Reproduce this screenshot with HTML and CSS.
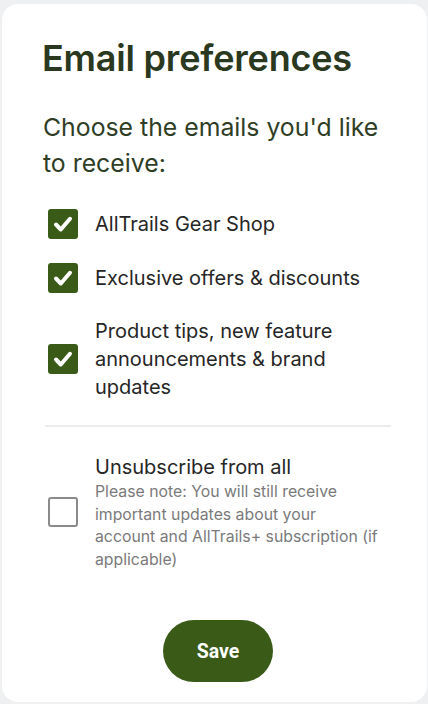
FILE: index.html
```html
<!DOCTYPE html>
<html lang="en">
<head>
<meta charset="UTF-8" />
<meta name="viewport" content="width=device-width, initial-scale=1" />
<title>Email preferences</title>
<link rel="stylesheet" href="styles.css">
</head>
<body>
<div class="card">
  <h1 class="title">Email preferences</h1>
  <p class="intro">Choose the emails you'd like to receive:</p>

  <ul class="options">
    <li class="option">
      <span class="box checked">
        <svg viewBox="0 0 30 30" width="30" height="30"><path d="M8 15.5 L12.8 20.5 L22 9.8" /></svg>
      </span>
      <span class="label">AllTrails Gear Shop</span>
    </li>
    <li class="option">
      <span class="box checked">
        <svg viewBox="0 0 30 30" width="30" height="30"><path d="M8 15.5 L12.8 20.5 L22 9.8" /></svg>
      </span>
      <span class="label">Exclusive offers &amp; discounts</span>
    </li>
    <li class="option">
      <span class="box checked">
        <svg viewBox="0 0 30 30" width="30" height="30"><path d="M8 15.5 L12.8 20.5 L22 9.8" /></svg>
      </span>
      <span class="label">Product tips, new feature announcements &amp; brand updates</span>
    </li>
  </ul>

  <hr class="divider">

  <div class="option unsub">
    <span class="box"></span>
    <div class="unsub-text">
      <span class="label">Unsubscribe from all</span>
      <p class="note">Please note: You will still receive important updates about your<br>account and AllTrails+ subscription (if applicable)</p>
    </div>
  </div>

  <div class="actions">
    <button class="save" type="button">Save</button>
  </div>
</div>
</body>
</html>
```

FILE: styles.css
```css
:root {
  --green: #3a5a17;
  --title: #2a3820;
  --text: #262626;
  --muted: #7a7a7a;
  --font: Inter, "Noto Sans", sans-serif;
}

*, *::before, *::after {
  box-sizing: border-box;
}

html, body {
  margin: 0;
  background: #eff0f1;
  font-family: var(--font);
}

/* Card */
.card {
  margin: 4px 1px 2px 2px;
  background: #fff;
  border-radius: 16px;
  padding: 30px 36px 20px 41px;
  height: 698px;
}

.title {
  margin: 0 0 0 -1px;
  font-size: 36px;
  line-height: 48px;
  font-weight: 600;
  color: var(--title);
  letter-spacing: -0.2px;
}

.intro {
  margin: 27px 0 0;
  font-size: 24.8px;
  line-height: 36px;
  color: #2f3d26;
}

/* Options */
.options {
  list-style: none;
  margin: 28px 0 0;
  padding: 0;
  display: flex;
  flex-direction: column;
  gap: 24px;
}

.option {
  display: flex;
  align-items: center;
  gap: 17px;
  padding-left: 5px;
}

.box {
  flex: none;
  width: 30px;
  height: 30px;
  border-radius: 3px;
  border: 2px solid #8a8a8a;
  display: flex;
}
.box.checked {
  background: var(--green);
  border: none;
}
.box svg path {
  fill: none;
  stroke: #fff;
  stroke-width: 4;
  stroke-linecap: round;
  stroke-linejoin: round;
}

.label {
  font-size: 20px;
  line-height: 28px;
  color: var(--text);
}

.divider {
  border: none;
  border-top: 2px solid #ececec;
  margin: 24px 0 26px 2px;
}

/* Unsubscribe */
.unsub-text {
  display: flex;
  flex-direction: column;
}
.note {
  margin: 0;
  font-size: 15.8px;
  line-height: 22.5px;
  color: var(--muted);
}

/* Save */
.actions {
  display: flex;
  justify-content: center;
  margin-top: 49px;
  padding-left: 2px;
}
.save {
  width: 110px;
  height: 62px;
  border: none;
  border-radius: 31px;
  background: var(--green);
  color: #fff;
  font-family: Roboto, sans-serif;
  font-weight: 700;
  font-size: 19.5px;
  cursor: pointer;
}
```
